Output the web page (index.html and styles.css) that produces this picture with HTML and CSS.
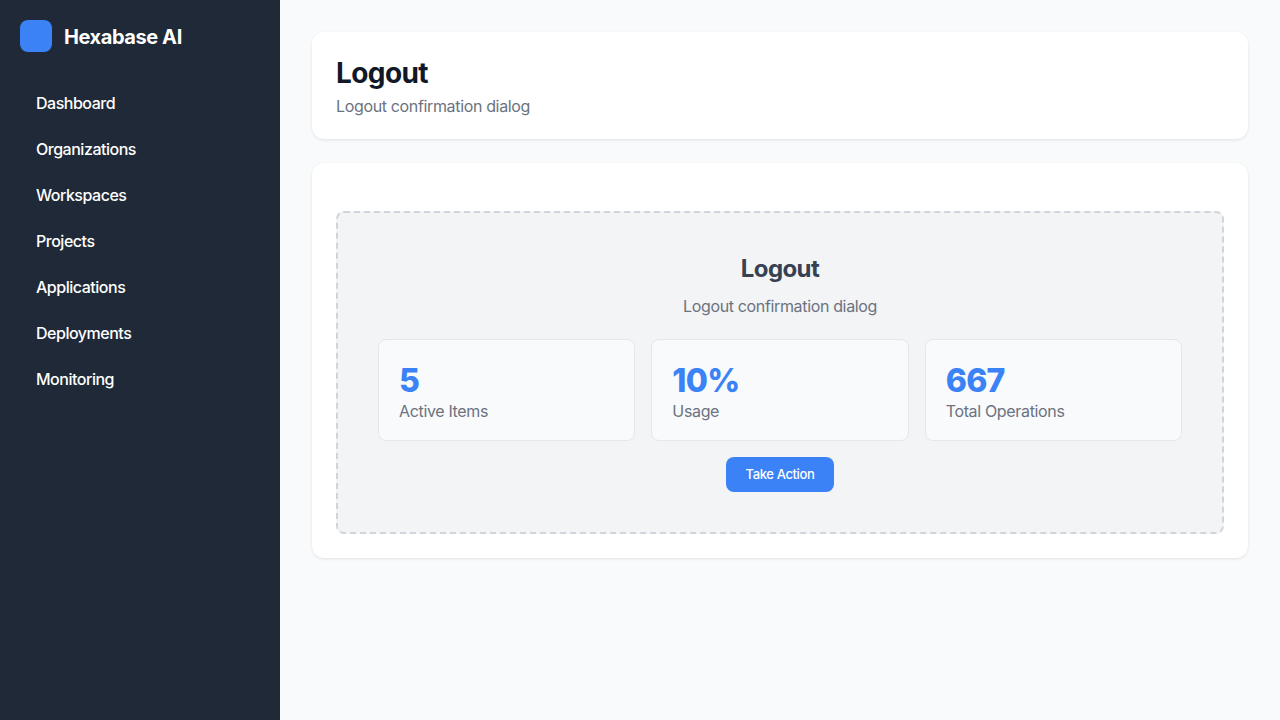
FILE: index.html
```html
<!DOCTYPE html>
<html lang="en">
  <head>
    <meta charset="UTF-8" />
    <meta name="viewport" content="width=device-width, initial-scale=1.0" />
    <title>Logout</title>
    <link rel="stylesheet" href="styles.css">
  </head>
  <body>
    <div class="layout">
      <aside class="sidebar">
        <div class="logo">
          <div class="logo-icon"></div>
          <div class="logo-text">Hexabase AI</div>
        </div>
        <nav class="nav">
          <a class="nav-item">Dashboard</a>
          <a class="nav-item">Organizations</a>
          <a class="nav-item">Workspaces</a>
          <a class="nav-item">Projects</a>
          <a class="nav-item">Applications</a>
          <a class="nav-item">Deployments</a>
          <a class="nav-item">Monitoring</a>
        </nav>
      </aside>
      <main class="main">
        <div class="card header">
          <h1>Logout</h1>
          <p>Logout confirmation dialog</p>
        </div>
        <div class="card content">
          <div class="placeholder">
            <h2>Logout</h2>
            <p>Logout confirmation dialog</p>
            <div class="stats">
              <div class="stat">
                <div class="stat-value">5</div>
                <div class="stat-label">Active Items</div>
              </div>
              <div class="stat">
                <div class="stat-value">10%</div>
                <div class="stat-label">Usage</div>
              </div>
              <div class="stat">
                <div class="stat-value">667</div>
                <div class="stat-label">Total Operations</div>
              </div>
            </div>
            <button class="btn">Take Action</button>
          </div>
        </div>
      </main>
    </div>
  </body>
</html>
```

FILE: styles.css
```css
* {
  box-sizing: border-box;
  margin: 0;
  padding: 0;
}
body {
  background: #f9fafb;
  font-family: 'Inter', sans-serif;
  color: #111827;
}
.layout {
  display: flex;
  min-height: 720px;
}
.sidebar {
  width: 280px;
  flex-shrink: 0;
  background: #1f2937;
  color: #fff;
  padding: 20px 20px;
}
.logo {
  display: flex;
  align-items: center;
  gap: 12px;
  margin-bottom: 30px;
}
.logo-icon {
  width: 32px;
  height: 32px;
  border-radius: 8px;
  background: #3b82f6;
}
.logo-text {
  padding-top: 2px;
  font-size: 20px;
  font-weight: 700;
  letter-spacing: -0.42px;
}
.nav-item {
  display: block;
  padding: 12px 16px;
  margin-bottom: 4px;
  font-size: 16px;
  line-height: 18px;
  font-weight: 450;
  letter-spacing: -0.48px;
  border-radius: 8px;
}
.main {
  flex: 1;
  padding: 32px;
}
.card {
  background: #fff;
  border-radius: 12px;
  padding: 24px;
  box-shadow: 0 1px 3px rgba(0, 0, 0, 0.1);
  margin-bottom: 24px;
}
.header h1 {
  font-size: 28px;
  line-height: 34px;
  font-weight: 700;
  letter-spacing: -0.6px;
  margin-bottom: 7px;
}
.header p {
  font-size: 16px;
  line-height: 18px;
  letter-spacing: -0.35px;
  color: #6b7280;
}
.content {
  padding-top: 48px;
}
.placeholder {
  background: #f3f4f6;
  border: 2px dashed #d1d5db;
  border-radius: 8px;
  padding: 40px;
  text-align: center;
}
.placeholder h2 {
  font-size: 24px;
  line-height: 32px;
  font-weight: 700;
  letter-spacing: -0.6px;
  color: #374151;
  margin-bottom: 12px;
}
.placeholder p {
  font-size: 16px;
  line-height: 19px;
  letter-spacing: -0.35px;
  color: #6b7280;
}
.stats {
  display: grid;
  grid-template-columns: repeat(3, 1fr);
  gap: 16px;
  margin-top: 23px;
}
.stat {
  background: #f9fafb;
  border: 1px solid #e5e7eb;
  border-radius: 8px;
  padding: 20px;
  text-align: left;
}
.stat-value {
  font-size: 32px;
  line-height: 41px;
  font-weight: 800;
  letter-spacing: -0.7px;
  color: #3b82f6;
  margin-bottom: 1px;
}
.stat-label {
  font-size: 16px;
  line-height: 18px;
  letter-spacing: -0.34px;
  color: #6b7280;
}
.btn {
  display: inline-block;
  vertical-align: top;
  margin-top: 16px;
  padding: 10px 20px;
  white-space: nowrap;
  background: #3b82f6;
  color: #fff;
  border: none;
  border-radius: 8px;
  font-family: 'Inter', sans-serif;
  font-size: 13px;
  line-height: 15px;
  font-weight: 450;
  letter-spacing: -0.38px;
}
```
